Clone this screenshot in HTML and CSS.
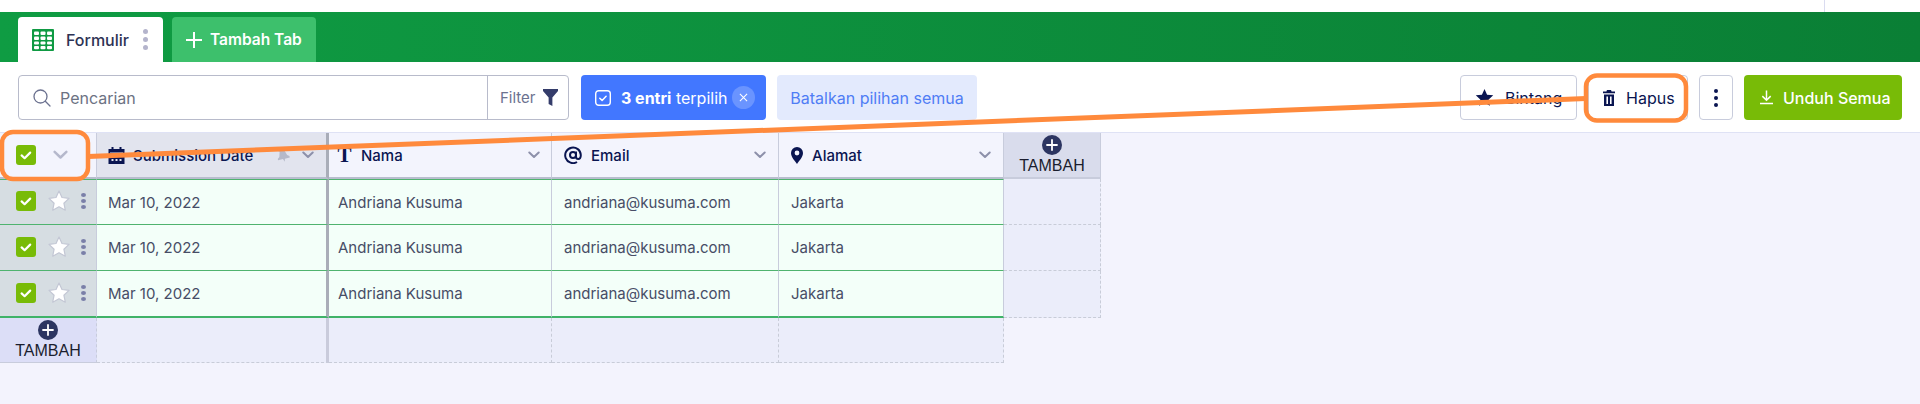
FILE: index.html
```html
<!DOCTYPE html>
<html lang="id">
<head>
  <meta charset="UTF-8" />
  <meta name="viewport" content="width=device-width, initial-scale=1.0" />
  <title>Tabel Formulir</title>
  <link rel="stylesheet" href="styles.css">
</head>
<body>
  <svg class="defs" aria-hidden="true">
    <symbol id="i-check" viewBox="0 0 20 20"><rect width="20" height="20" rx="3" fill="#78bb07"/><path d="M5.600 10.400l3 2.800 5.600-5.600" fill="none" stroke="#fff" stroke-width="2.200" stroke-linecap="round" stroke-linejoin="round"/></symbol>
    <symbol id="i-star" viewBox="0 0 22 22"><path d="M11 1l3 6.500 7 .9-5.100 4.800 1.400 7L11 16.800l-6.300 3.400 1.400-7L1 8.400l7-.9z" fill="#fff" stroke="#c3c7d4" stroke-width="1.200" stroke-linejoin="round"/></symbol>
    <symbol id="i-chev" viewBox="0 0 12 8"><path d="M1.300 1.500L6 6l4.700-4.500" fill="none" stroke="currentColor" stroke-width="2" stroke-linecap="round" stroke-linejoin="round"/></symbol>
    <symbol id="i-plus" viewBox="0 0 20 20"><circle cx="10" cy="10" r="10" fill="#2c3561"/><path d="M10 5v10M5 10h10" stroke="#fff" stroke-width="1.800" stroke-linecap="round"/></symbol>
  </svg>

  <div class="top-strip"><div class="top-strip-line"></div></div>

  <!-- tab -->
  <div class="tabbar">
    <div class="tab tab-active">
      <svg class="tab-grid" viewBox="0 0 22 22"><rect width="22" height="22" rx="1" fill="#0f9a43"/><g fill="#fff"><rect x="2" y="2.500" width="5" height="3.500" rx="1"/><rect x="8.500" y="2.500" width="5" height="3.500" rx="1"/><rect x="15" y="2.500" width="5" height="3.500" rx="1"/><rect x="2" y="7.500" width="5" height="3.500" rx="1"/><rect x="8.500" y="7.500" width="5" height="3.500" rx="1"/><rect x="15" y="7.500" width="5" height="3.500" rx="1"/><rect x="2" y="12.500" width="5" height="3" rx="1"/><rect x="8.500" y="12.500" width="5" height="3" rx="1"/><rect x="15" y="12.500" width="5" height="3" rx="1"/><rect x="2" y="17" width="5" height="3.200" rx="1"/><rect x="8.500" y="17" width="5" height="3.200" rx="1"/><rect x="15" y="17" width="5" height="3.200" rx="1"/></g></svg>
      <span>Formulir</span>
      <span class="dots dots-tab"><i></i><i></i><i></i></span>
    </div>
    <div class="tab tab-add">
      <svg class="tab-plus" viewBox="0 0 16 16"><path d="M8 0v16M0 8h16" stroke="#fff" stroke-width="2"/></svg>
      <span>Tambah Tab</span>
    </div>
  </div>

  <!-- toolbar -->
  <div class="toolbar">
    <div class="search">
      <div class="search-field">
        <svg class="search-icon" viewBox="0 0 18 18"><circle cx="7.500" cy="7.500" r="6.500" fill="none" stroke="#6c7290" stroke-width="1.300"/><path d="M12.300 12.300L17 17" stroke="#6c7290" stroke-width="1.300" stroke-linecap="round"/></svg>
        <span>Pencarian</span>
      </div>
      <div class="search-filter">
        <span>Filter</span>
        <svg class="funnel" viewBox="0 0 16 18"><path d="M0 0h16v2L10 9v9l-4-2V9L0 2z" fill="#343c6a"/></svg>
      </div>
    </div>
    <div class="selected">
      <svg class="selected-icon" viewBox="0 0 16 16"><rect x=".7" y=".7" width="14.600" height="14.600" rx="3" fill="none" stroke="#fff" stroke-width="1.400"/><path d="M4.800 8.200l2.300 2.200 4-4.200" fill="none" stroke="#fff" stroke-width="1.500" stroke-linecap="round" stroke-linejoin="round"/></svg>
      <span class="selected-text"><b>3 entri</b> terpilih</span>
      <span class="selected-close"><svg viewBox="0 0 10 10"><path d="M1 1l8 8M9 1l-8 8" stroke="#fff" stroke-width="1.200"/></svg></span>
    </div>
    <div class="unselect">Batalkan pilihan semua</div>

    <div class="actions">
      <div class="btn btn-star">
        <svg viewBox="0 0 20 20" class="btn-star-icon"><path d="M10 1l2.700 6 6.500.7-4.800 4.400 1.300 6.500L10 15.400l-5.700 3.200 1.300-6.500L.8 7.700 7.300 7z" fill="#0a1551"/></svg>
        <span>Bintang</span>
      </div>
      <div class="btn btn-delete">
        <svg viewBox="0 0 12 16" class="btn-trash"><path d="M4 0h4l.6 1.500H12v1.800H0V1.500h3.400zM1 4.500h10V16H1zM3.400 6.500v7.500h1.600V6.500zm3.600 0v7.500h1.600V6.500z" fill="#0a1551" fill-rule="evenodd"/></svg>
        <span>Hapus</span>
      </div>
      <div class="btn btn-more"><span class="dots dots-more"><i></i><i></i><i></i></span></div>
      <div class="btn-download">
        <svg viewBox="0 0 14 15" class="btn-download-icon"><path d="M7 0v10M2.500 6L7 10.500 11.500 6M0 14h14" fill="none" stroke="#fff" stroke-width="1.600"/></svg>
        <span>Unduh Semua</span>
      </div>
    </div>
  </div>

  <!-- tabel -->
  <div class="sheet">
    <div class="head head-first">
      <svg class="check"><use href="#i-check"/></svg>
      <svg class="chev chev-first"><use href="#i-chev"/></svg>
    </div>
    <div class="head head-date head-frozen">
      <svg class="head-icon" viewBox="0 0 16 17"><path d="M3 0h2v2h6V0h2v2h3v15H0V2h3z" fill="#0a1551"/><path d="M1.500 5.500h13v.8h-13z" fill="#e2e4ee"/><g fill="#e2e4ee"><rect x="3" y="8" width="2" height="2"/><rect x="7" y="8" width="2" height="2"/><rect x="11" y="8" width="2" height="2"/><rect x="3" y="12" width="2" height="2"/><rect x="7" y="12" width="2" height="2"/><rect x="11" y="12" width="2" height="2"/></g></svg>
      <span class="head-label">Submission Date</span>
      <svg class="pin" viewBox="0 0 14 14"><path d="M3 0h8v1.500L9.500 3l1.500 5 2 1.500V11H8l-1 3-1-3H1V9.500L3 8l1.500-5L3 1.500z" fill="#b6b9c9" transform="rotate(-14 7 7)"/></svg>
      <svg class="chev"><use href="#i-chev"/></svg>
    </div>
    <div class="head head-name">
      <span class="head-t">T</span>
      <span class="head-label">Nama</span>
      <svg class="chev"><use href="#i-chev"/></svg>
    </div>
    <div class="head">
      <svg class="head-icon head-at" viewBox="0 0 18 18"><path d="M16.800 9c0 2.500-1 4-2.600 4-1.400 0-2.200-1-2.200-2.500V5.500M12 9A3 3 0 1 1 6 9a3 3 0 0 1 6 0zM13 16a7.800 7.800 0 1 1 3.800-7" fill="none" stroke="#0a1551" stroke-width="2"/></svg>
      <span class="head-label">Email</span>
      <svg class="chev"><use href="#i-chev"/></svg>
    </div>
    <div class="head">
      <svg class="head-icon head-pin" viewBox="0 0 12 17"><path d="M6 0a6 6 0 0 1 6 6c0 4-4 8-6 11-2-3-6-7-6-11a6 6 0 0 1 6-6zm0 3.600a2.400 2.400 0 1 0 0 4.800 2.400 2.400 0 0 0 0-4.800z" fill="#0a1551" fill-rule="evenodd"/></svg>
      <span class="head-label">Alamat</span>
      <svg class="chev"><use href="#i-chev"/></svg>
    </div>
    <div class="add add-col">
      <svg class="add-icon"><use href="#i-plus"/></svg>
      <span>TAMBAH</span>
    </div>

    <div class="row-head row-first"><svg class="check"><use href="#i-check"/></svg><svg class="star"><use href="#i-star"/></svg><span class="dots dots-row"><i></i><i></i><i></i></span></div>
    <div class="cell cell-frozen row-first">Mar 10, 2022</div>
    <div class="cell cell-name row-first">Andriana Kusuma</div>
    <div class="cell row-first">andriana@kusuma.com</div>
    <div class="cell row-first">Jakarta</div>
    <div class="blank blank-side"></div>

    <div class="row-head"><svg class="check"><use href="#i-check"/></svg><svg class="star"><use href="#i-star"/></svg><span class="dots dots-row"><i></i><i></i><i></i></span></div>
    <div class="cell cell-frozen">Mar 10, 2022</div>
    <div class="cell cell-name">Andriana Kusuma</div>
    <div class="cell">andriana@kusuma.com</div>
    <div class="cell">Jakarta</div>
    <div class="blank blank-side"></div>

    <div class="row-head row-last"><svg class="check"><use href="#i-check"/></svg><svg class="star"><use href="#i-star"/></svg><span class="dots dots-row"><i></i><i></i><i></i></span></div>
    <div class="cell cell-frozen row-last">Mar 10, 2022</div>
    <div class="cell cell-name row-last">Andriana Kusuma</div>
    <div class="cell row-last">andriana@kusuma.com</div>
    <div class="cell row-last">Jakarta</div>
    <div class="blank blank-side"></div>

    <div class="add add-row">
      <svg class="add-icon"><use href="#i-plus"/></svg>
      <span>TAMBAH</span>
    </div>
    <div class="blank blank-frozen"></div>
    <div class="blank"></div>
    <div class="blank"></div>
    <div class="blank"></div>
  </div>

  <!-- anotasi oranye di atas halaman -->
  <svg class="annotation" viewBox="0 0 1920 404">
    <line x1="88" y1="156.500" x2="1586" y2="98.500" stroke="#ff8a3c" stroke-width="5"/>
    <rect x="2" y="132" width="86" height="47" rx="11" fill="none" stroke="#ff8a3c" stroke-width="4.500"/>
    <rect x="1586" y="75.500" width="100" height="45" rx="11" fill="none" stroke="#ff8a3c" stroke-width="4.500"/>
  </svg>
</body>
</html>
```

FILE: styles.css
```css
html, body {
  margin: 0;
  padding: 0;
  height: 404px;
  overflow: hidden;
}
body {
  position: relative;
  font-family: "Inter", "Liberation Sans", sans-serif;
  background-color: #f3f3fd;
  color: #0a1551;
}
.defs {
  display: none;
}

.top-strip {
  display: flex;
  justify-content: flex-end;
  height: 12px;
  background-color: #fff;
}
.top-strip-line {
  width: 95px;
  border-left: 1px solid #dadcf0;
}

.tabbar {
  display: flex;
  align-items: flex-end;
  gap: 9px;
  height: 50px;
  padding-left: 18px;
  background: linear-gradient(90deg, #0f9c43, #0a7f35);
}
.tab {
  display: flex;
  align-items: center;
  box-sizing: border-box;
  width: 145px;
  height: 45px;
  border-radius: 4px 4px 0 0;
  font-size: 16px;
  font-weight: 500;
}
.tab-active {
  padding-left: 14px;
  background-color: #fff;
  color: #2c3254;
}
.tab-grid {
  width: 22px;
  height: 22px;
  margin-right: 12px;
}
.tab-add {
  width: 144px;
  padding-left: 14px;
  background-color: #3dc06c;
  color: #fff;
  font-size: 15.500px;
  font-weight: 600;
}
.tab-plus {
  width: 16px;
  height: 16px;
  margin-right: 8px;
}

.dots {
  display: flex;
  flex-direction: column;
  align-items: center;
}
.dots i {
  display: block;
  border-radius: 50%;
}
.dots-tab {
  gap: 3px;
  margin-left: 14px;
}
.dots-tab i {
  width: 5px;
  height: 5px;
  background-color: #b4b4cc;
}
.dots-more {
  gap: 3px;
}
.dots-more i {
  width: 4px;
  height: 4px;
  background-color: #0a1551;
}
.dots-row {
  gap: 2px;
  margin-left: 11px;
}
.dots-row i {
  width: 5px;
  height: 4px;
  background-color: #7a7fa8;
}

.toolbar {
  display: flex;
  gap: 11px;
  box-sizing: border-box;
  height: 71px;
  padding: 13px 18px 12px;
  background-color: #fff;
  border-bottom: 1px solid #dfe2f5;
}
.search {
  display: flex;
  box-sizing: border-box;
  width: 551px;
  margin-right: 1px;
  border: 1px solid #b8bbcb;
  border-radius: 4px;
}
.search-field {
  display: flex;
  align-items: center;
  flex: 1;
  padding-left: 14px;
  font-size: 16px;
  color: #6c7283;
}
.search-icon {
  width: 18px;
  height: 18px;
  margin-right: 9px;
}
.search-filter {
  display: flex;
  align-items: center;
  width: 81px;
  padding-left: 12px;
  box-sizing: border-box;
  border-left: 1px solid #b8bbcb;
  font-size: 15px;
  color: #6c7290;
}
.funnel {
  width: 15px;
  height: 17px;
  margin-left: 7px;
}

.selected {
  display: flex;
  align-items: center;
  box-sizing: border-box;
  width: 185px;
  padding-left: 14px;
  border-radius: 4px;
  background-color: #4277ff;
  color: #fff;
  font-size: 16px;
}
.selected-icon {
  width: 16px;
  height: 16px;
  margin-right: 10px;
}
.selected-text {
  white-space: nowrap;
}
.selected-close {
  display: flex;
  align-items: center;
  justify-content: center;
  width: 23px;
  height: 23px;
  margin-left: 4px;
  border-radius: 50%;
  background-color: #6a94ff;
}
.selected-close svg {
  width: 9px;
  height: 9px;
}
.unselect {
  display: flex;
  align-items: center;
  justify-content: center;
  width: 200px;
  border-radius: 4px;
  background-color: #e3eafd;
  color: #4f7df5;
  font-size: 16px;
}

.actions {
  display: flex;
  gap: 11px;
  margin-left: auto;
}
.btn {
  display: flex;
  align-items: center;
  box-sizing: border-box;
  border: 1px solid #c8ccdc;
  border-radius: 4px;
  font-size: 16px;
  color: #0a1551;
}
.btn-star {
  width: 117px;
  padding-left: 14px;
}
.btn-star-icon {
  width: 19px;
  height: 19px;
  margin-right: 11px;
}
.btn-delete {
  width: 100px;
  padding-left: 14px;
}
.btn-trash {
  width: 12px;
  height: 16px;
  margin-right: 11px;
}
.btn-more {
  justify-content: center;
  width: 34px;
}
.btn-download {
  display: flex;
  align-items: center;
  box-sizing: border-box;
  width: 158px;
  padding-left: 16px;
  border-radius: 4px;
  background-color: #78bb07;
  color: #fff;
  font-size: 16px;
  font-weight: 500;
}
.btn-download-icon {
  width: 13px;
  height: 15px;
  margin-right: 10px;
}

.sheet {
  display: grid;
  grid-template-columns: 97px 232px 223px 227px 225px 97px;
  grid-template-rows: 46px 46px 46px 47px 45px;
  width: 901px;
  font-size: 15px;
}
.head {
  display: flex;
  align-items: center;
  box-sizing: border-box;
  padding: 0 12px;
  background-color: #f3f4fd;
  border-right: 1px solid #c8ccdc;
  border-bottom: 2px solid #b8bdce;
  font-weight: 500;
}
.head-first {
  padding: 0 0 0 16px;
}
.head-frozen {
  padding-left: 11px;
  background-color: #e2e4ee;
  border-right: 3px solid #a9adb8;
}
.head-date .head-label {
  margin-left: 8px;
}
.head-name {
  padding: 0 11px 0 8px;
}
.head-label {
  margin-left: 9px;
}
.head-icon {
  width: 17px;
  height: 17px;
}
.head-at {
  width: 18px;
  height: 18px;
}
.head-pin {
  width: 12px;
}
.head-t {
  width: 15px;
  font-family: "Liberation Serif", serif;
  font-size: 21px;
  font-weight: 700;
  text-align: center;
}
.pin {
  width: 14px;
  height: 14px;
  margin-left: auto;
  margin-right: 12px;
}
.chev {
  width: 12px;
  height: 8px;
  margin-left: auto;
  color: #8d90aa;
}
.pin + .chev {
  margin-left: 0;
}
.chev-first {
  width: 17px;
  height: 10px;
  margin-left: 16px;
  color: #b5b8cc;
}

.check {
  width: 20px;
  height: 20px;
  flex: none;
}
.star {
  width: 22px;
  height: 22px;
  margin-left: 12px;
  flex: none;
}
.row-head {
  display: flex;
  align-items: center;
  box-sizing: border-box;
  padding: 0 0 2px 16px;
  background-color: #d6dde2;
  border-right: 1px solid #c8ccdc;
  border-bottom: 1px solid #4fb36f;
}
.cell {
  display: flex;
  align-items: center;
  box-sizing: border-box;
  padding-left: 12px;
  background-color: #f3fff9;
  border-right: 1px solid #c8ccdc;
  border-bottom: 1px solid #4fb36f;
  color: #474d66;
}
.cell-frozen {
  padding-left: 11px;
  border-right: 3px solid #a9adb8;
}
.cell-name {
  padding-left: 9px;
}
.row-first {
  border-top: 1px solid #4fb36f;
}
.row-last {
  border-bottom: 2px solid #3fb368;
}

.add {
  display: flex;
  flex-direction: column;
  align-items: center;
  box-sizing: border-box;
  padding-top: 2px;
  font-family: "Liberation Sans", sans-serif;
  font-size: 16px;
  line-height: 20px;
  color: #1a1d2e;
}
.add-icon {
  width: 20px;
  height: 20px;
  margin-bottom: 1px;
}
.add-col {
  background-color: #d9dcec;
  border-right: 1px solid #c8ccdc;
  border-bottom: 2px solid #c8ccdc;
}
.add-row {
  background-color: #dcdef7;
  border-right: 1px dashed #c8ccdc;
  border-bottom: 1px solid #c8ccdc;
}

.blank {
  box-sizing: border-box;
  background-color: #ebedfa;
  border-right: 1px dashed #c8ccd8;
  border-bottom: 1px dashed #c8ccd8;
}
.blank-frozen {
  border-right: 3px solid #c9cbdb;
}

.annotation {
  position: absolute;
  top: 0;
  left: 0;
  width: 1920px;
  height: 404px;
  pointer-events: none;
}
```
